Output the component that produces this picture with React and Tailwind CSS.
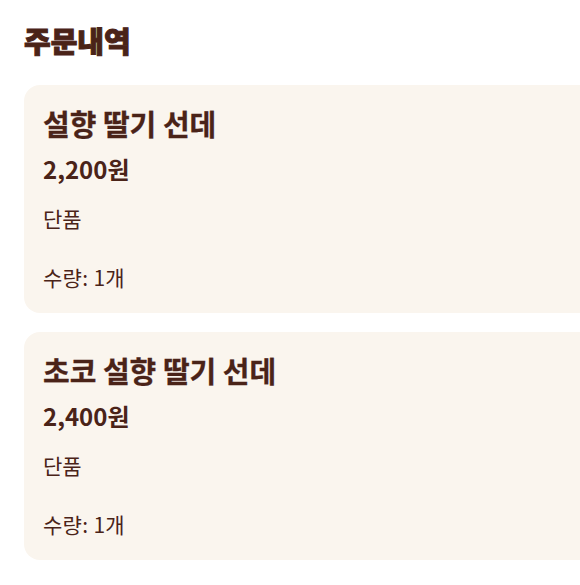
const orders = [
    { id: 1, name: '설향 딸기 선데', price: 2200, option: '단품', quantity: 1 },
    { id: 2, name: '초코 설향 딸기 선데', price: 2400, option: '단품', quantity: 1 },
];

const formatPrice = (price) => price.toLocaleString('ko-KR') + '원';

const OrderCard = ({ order }) => {
    return (
        <div className="w-[620px] h-[228px] rounded-2xl bg-[#faf5ee] pl-[19px] pt-[20px]">
            <h3 className="text-[29px] leading-[36px] font-bold [-webkit-text-stroke:0.3px_#4a2318]">{order.name}</h3>
            <p className="mt-[13px] text-[24px] leading-[30px] font-bold">{formatPrice(order.price)}</p>
            <p className="mt-[20px] text-[21px] leading-[28px]">{order.option}</p>
            <p className="mt-[31px] text-[21px] leading-[28px] tracking-[0.3px]">수량: {order.quantity}개</p>
        </div>
    );
};

export default function App() {
    return (
        <div
            className="w-[580px] h-[585px] overflow-hidden bg-white text-[#4a2318]"
            style={{ fontFamily: '"Noto Sans CJK KR", "Noto Sans", sans-serif' }}
        >
            <div className="pl-6 pt-[22px]">
                {/* Header */}
                <h2 className="text-[29px] leading-[36px] font-black [-webkit-text-stroke:1px_#4a2318]">주문내역</h2>

                {/* Order list */}
                <div className="mt-[27px] flex flex-col gap-[19px]">
                    {orders.map((order) => (
                        <OrderCard key={order.id} order={order} />
                    ))}
                </div>
            </div>
        </div>
    );
}
